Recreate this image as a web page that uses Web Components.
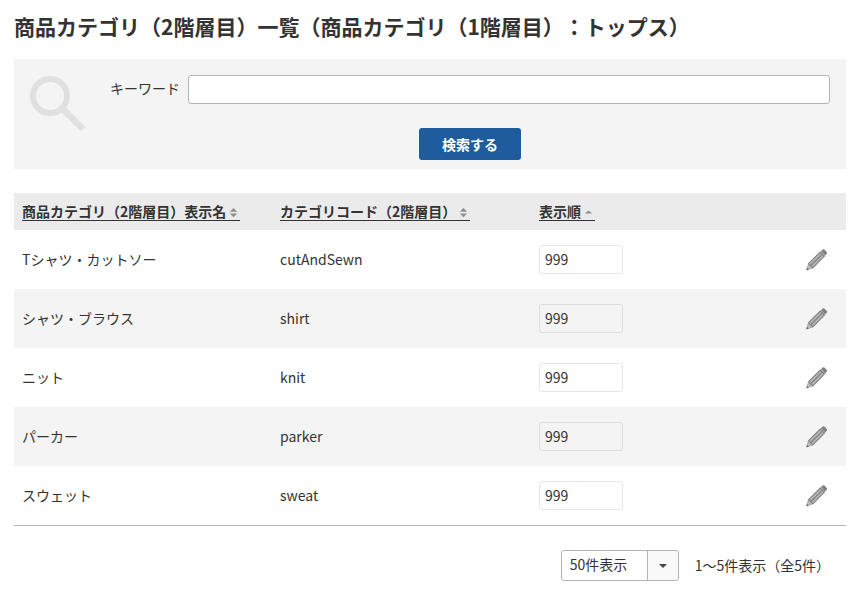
<!DOCTYPE html>
<html lang="ja">
<head>
<meta charset="utf-8">
<title>商品カテゴリ一覧</title>
<style>
  html, body { margin: 0; padding: 0; background: #fff; }
  body { font-family: "Noto Sans CJK JP", "Noto Sans", sans-serif; font-size: 14px; color: #333; text-spacing-trim: space-all; }
</style>
</head>
<body>
<category-page>
  <span slot="title">商品カテゴリ（2階層目）一覧（商品カテゴリ（1階層目）：トップス）</span>
  <search-panel slot="search"></search-panel>
  <category-table slot="table">
    <category-row name="Tシャツ・カットソー" code="cutAndSewn" order="999"></category-row>
    <category-row name="シャツ・ブラウス" code="shirt" order="999" shaded></category-row>
    <category-row name="ニット" code="knit" order="999"></category-row>
    <category-row name="パーカー" code="parker" order="999" shaded></category-row>
    <category-row name="スウェット" code="sweat" order="999"></category-row>
  </category-table>
  <list-pager slot="pager"></list-pager>
</category-page>

<script>
  const define = (name, html, props = {}) => {
    if (window.customElements.get(name)) return;
    window.customElements.define(
      name,
      class extends HTMLElement {
        constructor() {
          super();
          this.attachShadow({ mode: 'open' });
          this.shadowRoot.innerHTML = html;
        }
        connectedCallback() {
          if (props.render) props.render(this);
        }
      },
    );
  };

  define('category-page', `
    <style>
      :host { display: block; padding: 0 16px 0 14px; }
      h1 { margin: 0; padding: 11px 0 17px; font-size: 21px; line-height: 31px; font-weight: 700; color: #333; white-space: nowrap; }
      .search { display: block; margin-bottom: 24px; }
      .pager { display: block; margin-top: 24px; }
    </style>
    <h1><slot name="title"></slot></h1>
    <div class="search"><slot name="search"></slot></div>
    <slot name="table"></slot>
    <div class="pager"><slot name="pager"></slot></div>
  `);

  define('search-panel', `
    <style>
      :host { display: block; background: #f4f4f4; height: 110px; box-sizing: border-box; padding: 16px 16px 9px 16px; }
      .wrap { display: grid; grid-template-columns: 56px 1fr; column-gap: 24px; }
      svg { display: block; width: 58px; height: 58px; margin-top: -1px; }
      .main { display: flex; flex-direction: column; align-items: stretch; }
      .field { display: flex; align-items: center; gap: 8px; }
      label { flex: none; font-size: 14px; line-height: 29px; color: #333; position: relative; top: -1px; }
      input { flex: 1; min-width: 0; height: 29px; box-sizing: border-box; border: 1px solid #b3b3b3; border-radius: 3px; background: #fff; padding: 0 8px; }
      button { display: block; width: 102px; height: 32px; margin: 24px auto 0; padding: 0 0 1px; border: 0; border-radius: 3px; background: #1f5c9e; color: #fff; font: 700 14px "Noto Sans CJK JP", sans-serif; }
    </style>
    <div class="wrap">
      <svg viewBox="0 0 58 58" aria-hidden="true">
        <circle cx="20" cy="22" r="17" fill="none" stroke="#e0e0e0" stroke-width="6"></circle>
        <path d="M32 34 L53 55" fill="none" stroke="#e0e0e0" stroke-width="6.5"></path>
      </svg>
      <div class="main">
        <div class="field"><label>キーワード</label><input type="text"></div>
        <button type="button">検索する</button>
      </div>
    </div>
  `);

  define('sort-mark', `
    <style>
      :host { display: inline-block; width: 14px; height: 12px; vertical-align: -2px; }
      svg { display: block; width: 14px; height: 12px; }
    </style>
    <svg viewBox="0 0 14 12" aria-hidden="true"><path class="up" d="M7.5 1 L11.2 4.8 H3.8 Z" fill="#8f8f8f"></path><path class="down" d="M3.8 6.4 H11.2 L7.5 10.2 Z" fill="#8f8f8f"></path></svg>
  `, {
    render: el => {
      if (el.hasAttribute('asc')) {
        el.shadowRoot.querySelector('.down').remove();
        el.shadowRoot.querySelector('.up').setAttribute('d', 'M7.5 3.4 L11.2 6.6 H3.8 Z');
      }
    },
  });

  define('category-table', `
    <style>
      :host { display: block; border-bottom: 1px solid #b3b3b3; }
      .head { display: grid; grid-template-columns: 258px 259px 1fr; height: 37px; align-items: center; background: #ebebeb; padding-left: 8px; font-weight: 700; font-size: 14px; color: #333; }
      a { display: inline-block; line-height: 18px; color: inherit; text-decoration: none; border-bottom: 1px solid #333; }
      span { display: flex; margin-top: -1px; }
    </style>
    <div class="head">
      <span><a>商品カテゴリ（2階層目）表示名<sort-mark></sort-mark></a></span>
      <span><a>カテゴリコード（2階層目）<sort-mark></sort-mark></a></span>
      <span><a>表示順<sort-mark asc></sort-mark></a></span>
    </div>
    <slot></slot>
  `);

  define('edit-icon', `
    <style>
      :host { display: block; width: 22px; height: 22px; }
      svg { display: block; width: 22px; height: 22px; }
    </style>
    <svg viewBox="0 0 22 22" aria-hidden="true">
      <path d="M16.6 0.6 Q17.5 0 18.4 0.6 L20.8 3 Q21.4 3.9 20.8 4.8 L19.2 6.4 L15 2.2 Z" fill="#808080"></path>
      <path d="M14.3 3 L18.4 7.1 L6.7 18.8 L2.6 14.7 Z" fill="#b8b8b8" stroke="#7f7f7f" stroke-width="1.2"></path>
      <path d="M16.35 5.05 L4.65 16.75" stroke="#7f7f7f" stroke-width="1.2" fill="none"></path>
      <path d="M2.2 15.6 L5.8 19.2 L0.6 21 Z" fill="#bdbdbd" stroke="#8c8c8c" stroke-width="0.6"></path>
      <path d="M0.5 21.2 L1 18.9 L2.9 20.4 Z" fill="#666"></path>
    </svg>
  `);

  define('category-row', `
    <style>
      :host { display: grid; grid-template-columns: 258px 259px 84px 1fr; height: 59px; align-items: center; padding-left: 8px; background: #fff; font-size: 14px; color: #333; }
      :host([shaded]) { background: #f4f4f4; }
      span { margin-top: -2px; }
      input { display: block; width: 84px; height: 29px; box-sizing: border-box; border: 1px solid #e6e6e6; border-radius: 3px; background: #fff; padding: 0 5px 2px; font: 14px "Noto Sans CJK JP", sans-serif; color: #333; }
      :host([shaded]) input { background: #f4f4f4; border-color: #dedede; }
      edit-icon { justify-self: end; margin-right: 18px; }
    </style>
    <span class="name"></span>
    <span class="code"></span>
    <input type="text">
    <edit-icon></edit-icon>
  `, {
    render: el => {
      const root = el.shadowRoot;
      root.querySelector('.name').textContent = el.getAttribute('name');
      root.querySelector('.code').textContent = el.getAttribute('code');
      root.querySelector('input').setAttribute('value', el.getAttribute('order'));
    },
  });

  define('list-pager', `
    <style>
      :host { display: flex; justify-content: flex-end; align-items: center; gap: 16px; padding-right: 16px; font-size: 14px; color: #333; }
      .select { display: grid; grid-template-columns: 85px 31px; width: 118px; height: 31px; box-sizing: border-box; border: 1px solid #b3b3b3; border-radius: 3px; background: #fff; }
      .label { line-height: 27px; padding-left: 8px; }
      .arrow { display: flex; align-items: center; justify-content: center; border-left: 1px solid #b3b3b3; background: #f9f9f9; border-radius: 0 3px 3px 0; }
      .arrow i { display: block; width: 0; height: 0; border: 4px solid transparent; border-top: 4px solid #444; border-bottom: 0; }
      .count { position: relative; top: -1px; }
    </style>
    <div class="select"><span class="label">50件表示</span><span class="arrow"><i></i></span></div>
    <span class="count">1〜5件表示（全5件）</span>
  `);
</script>
</body>
</html>
